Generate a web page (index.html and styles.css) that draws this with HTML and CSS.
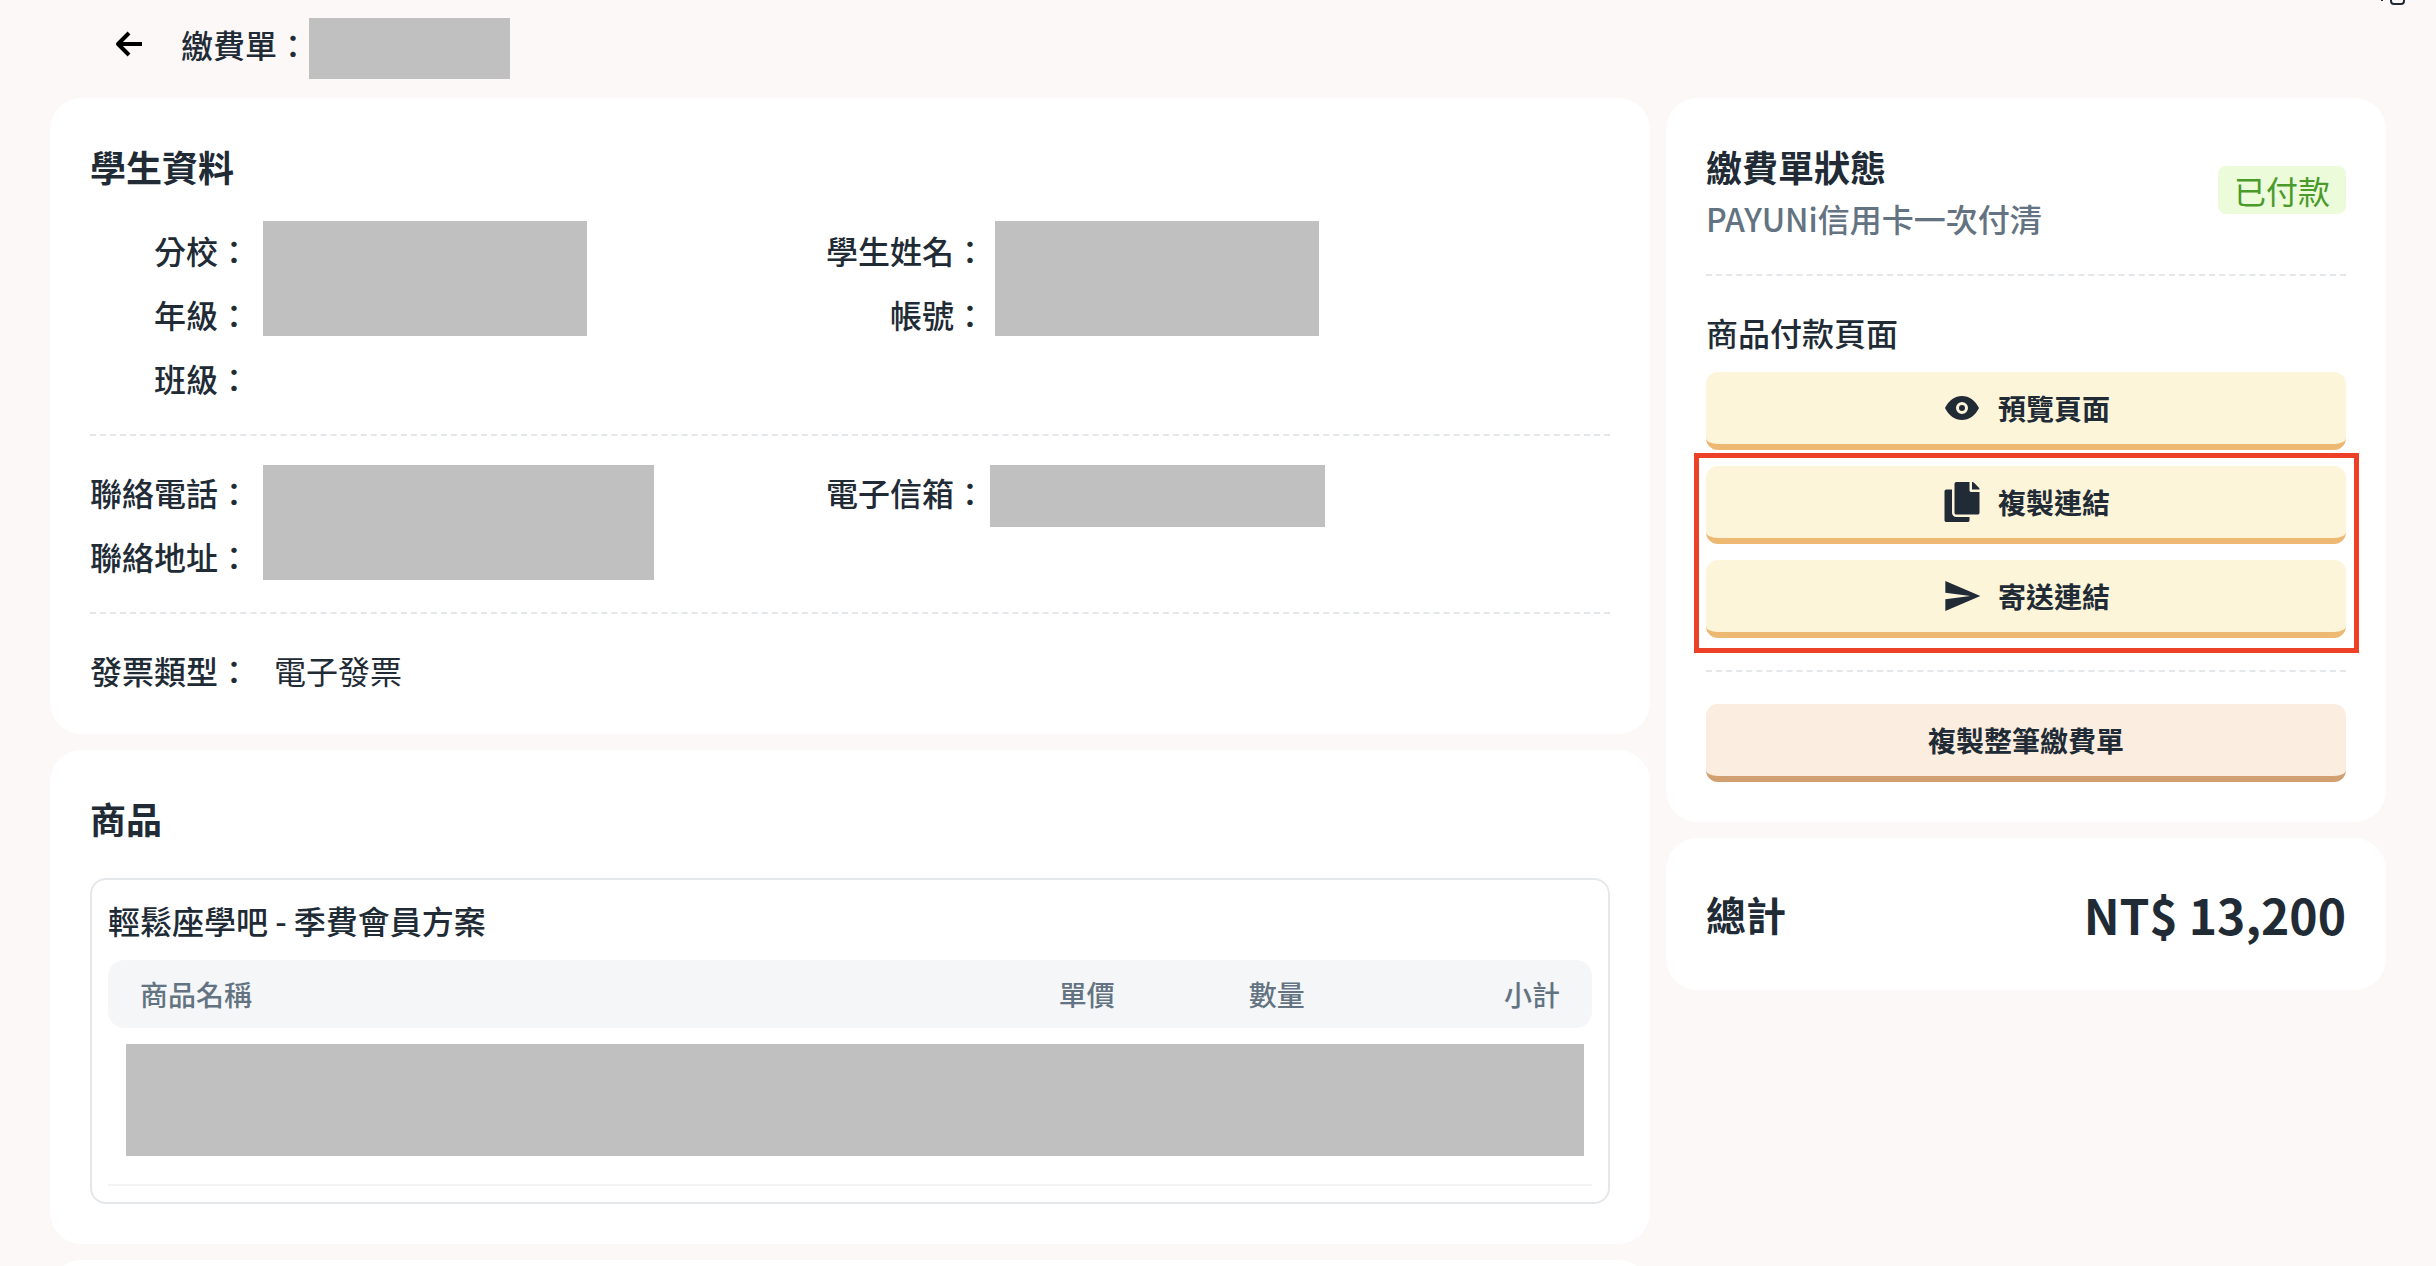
FILE: index.html
```html
<!DOCTYPE html>
<html lang="zh-Hant">
<head>
  <meta charset="UTF-8" />
  <meta name="viewport" content="width=device-width, initial-scale=1.0">
  <title>繳費單</title>
  <link rel="stylesheet" href="styles.css">
</head>
<body>
  <svg class="corner-icon" viewBox="0 0 28 6" aria-hidden="true">
    <path d="M1 0h2v1H1z" fill="#212b36" />
    <path d="M11 -2v3a3 3 0 0 0 3 3h7a3 3 0 0 0 3-3v-3" fill="none" stroke="#212b36" stroke-width="2" />
  </svg>

  <header class="page-header">
    <button class="back-btn" aria-label="返回">
      <svg viewBox="0 0 28 28"><path d="M28 14H3M15 3L4 14l11 11" fill="none" stroke="#000" stroke-width="4" stroke-linejoin="round" /></svg>
    </button>
    <h1>繳費單：</h1>
    <span class="mask mask-id"></span>
  </header>

  <main class="layout">
    <div class="column column-main">
      <section class="card">
        <h2>學生資料</h2>
        <div class="info-grid">
          <div class="info">
            <div class="labels"><span>分校：</span><span>年級：</span><span>班級：</span></div>
            <span class="mask mask-student"></span>
          </div>
          <div class="info info-second">
            <div class="labels"><span>學生姓名：</span><span>帳號：</span></div>
            <span class="mask mask-student"></span>
          </div>
        </div>
        <hr>
        <div class="info-grid">
          <div class="info">
            <div class="labels"><span>聯絡電話：</span><span>聯絡地址：</span></div>
            <span class="mask mask-contact"></span>
          </div>
          <div class="info info-email">
            <div class="labels"><span>電子信箱：</span></div>
            <span class="mask mask-email"></span>
          </div>
        </div>
        <hr>
        <div class="info info-invoice">
          <div class="labels"><span>發票類型：</span></div>
          <span>電子發票</span>
        </div>
      </section>

      <section class="card">
        <h2>商品</h2>
        <div class="product">
          <h3>輕鬆座學吧 - 季費會員方案</h3>
          <table>
            <thead>
              <tr>
                <th class="col-name">商品名稱</th>
                <th class="col-price">單價</th>
                <th class="col-qty">數量</th>
                <th class="col-total">小計</th>
              </tr>
            </thead>
            <tbody>
              <tr>
                <td colspan="4"><div class="mask mask-row"></div></td>
              </tr>
            </tbody>
          </table>
        </div>
      </section>

      <section class="card"></section>
    </div>

    <aside class="column column-side">
      <section class="card">
        <div class="status">
          <div>
            <h2>繳費單狀態</h2>
            <p>PAYUNi信用卡一次付清</p>
          </div>
          <span class="badge">已付款</span>
        </div>
        <hr>
        <h3>商品付款頁面</h3>
        <div class="actions">
          <button class="btn">
            <svg viewBox="0 0 40 40">
              <path fill-rule="evenodd" d="M3 20C7 12 13 8 20 8s13 4 17 12c-4 8-10 12-17 12S7 28 3 20zM20 14a6 6 0 1 0 0 12 6 6 0 0 0 0-12z" />
              <circle cx="20" cy="20" r="3" />
            </svg>
            預覽頁面
          </button>
          <div class="actions highlight">
            <button class="btn">
              <svg viewBox="0 0 512 512"><path transform="translate(32 0)" d="M320 448v40c0 13.255-10.745 24-24 24H24c-13.255 0-24-10.745-24-24V120c0-13.255 10.745-24 24-24h72v296c0 30.879 25.121 56 56 56h168zm0-344V0H152c-13.255 0-24 10.745-24 24v368c0 13.255 10.745 24 24 24h272c13.255 0 24-10.745 24-24V128H344c-13.200 0-24-10.800-24-24zm120.971-31.029L375.029 7.029A24 24 0 0 0 358.059 0H352v96h96v-6.059a24 24 0 0 0-7.029-16.970z" /></svg>
              複製連結
            </button>
            <button class="btn">
              <svg viewBox="0 0 24 24"><path d="M2.010 21L23 12 2.010 3 2 10l15 2-15 2z" /></svg>
              寄送連結
            </button>
          </div>
        </div>
        <hr>
        <button class="btn btn-copy">複製整筆繳費單</button>
      </section>

      <section class="card total">
        <span class="total-label">總計</span>
        <span class="total-value">NT$ 13,200</span>
      </section>
    </aside>
  </main>
</body>
</html>
```
FILE: styles.css
```css
:root {
  --bg: #fcf8f7;
  --text: #212b36;
  --muted: #637381;
  --line: #e5e8eb;
  --mask: #c0c0c0;
}

* {
  box-sizing: border-box;
}

html {
  scrollbar-width: none;
}

body {
  margin: 0;
  background: var(--bg);
  color: var(--text);
  font-family: "Noto Sans CJK TC", sans-serif;
  font-size: 32px;
  line-height: 48px;
}

h1, h2, h3, p {
  margin: 0;
}

h1, h3 {
  font-size: 32px;
  font-weight: 500;
}

h2 {
  font-size: 36px;
  line-height: 56px;
  font-weight: 700;
}

hr {
  margin: 32px 0;
  border: 0;
  border-top: 2px dashed var(--line);
}

.corner-icon {
  position: absolute;
  top: 0;
  right: 28px;
  width: 28px;
  height: 6px;
}

.page-header {
  display: flex;
  align-items: center;
  padding: 18px 50px 19px 108px;
}

.back-btn {
  display: flex;
  width: 40px;
  padding: 6px;
  margin: 0 33px 10px 0;
  border: 0;
  background: none;
  cursor: pointer;
}

.back-btn svg {
  width: 28px;
  height: 28px;
}

.page-header h1 {
  margin-bottom: 10px;
}

.mask {
  display: block;
  flex: none;
  background: var(--mask);
}

.mask-id {
  width: 201px;
  height: 61px;
}

.mask-student {
  width: 324px;
  height: 115px;
}

.mask-contact {
  width: 391px;
  height: 115px;
}

.mask-email {
  width: 335px;
  height: 62px;
}

.mask-row {
  height: 112px;
}

.layout {
  display: flex;
  align-items: flex-start;
  gap: 16px;
  padding: 0 50px;
}

.column {
  display: flex;
  flex-direction: column;
  gap: 16px;
  min-width: 0;
}

.column-main {
  flex: 20 1 0;
}

.column-side {
  flex: 9 1 0;
}

.card {
  padding: 40px;
  border-radius: 32px;
  background: #fff;
}

.info-grid {
  display: grid;
  grid-template-columns: 46fr 49fr;
}

.card h2 + .info-grid {
  margin-top: 32px;
}

.info {
  display: flex;
  align-items: flex-start;
  gap: 13px;
}

.info-second {
  gap: 9px;
}

.info-email {
  gap: 4px;
}

.info-invoice {
  gap: 24px;
}

.mask-student {
  margin-top: -5px;
}

.mask-contact,
.mask-email {
  margin-top: -3px;
}

.labels {
  display: flex;
  flex-direction: column;
  gap: 16px;
  width: 160px;
  text-align: right;
  font-weight: 500;
}

.product {
  margin-top: 32px;
  padding: 16px;
  border: 2px solid var(--line);
  border-radius: 16px;
}

table {
  width: 100%;
  margin-top: 16px;
  border-spacing: 0;
  table-layout: fixed;
}

th {
  height: 68px;
  padding: 0 32px;
  background: #f4f6f8;
  color: var(--muted);
  font-size: 28px;
  line-height: 40px;
  font-weight: 500;
  text-align: right;
}

th:first-child {
  border-radius: 16px 0 0 16px;
  text-align: left;
}

th:last-child {
  border-radius: 0 16px 16px 0;
}

.col-price {
  width: 15%;
}

.col-qty {
  width: 12.8%;
}

.col-total {
  width: 17.2%;
}

td {
  padding: 16px 8px 28px 18px;
  border-bottom: 2px solid #f1f3f4;
}

.status {
  display: flex;
  align-items: center;
  justify-content: space-between;
}

.status p {
  color: var(--muted);
  font-weight: 500;
}

.badge {
  padding: 0 16px;
  border-radius: 8px;
  background: #ecfbd9;
  color: #4b9a2c;
}

.actions {
  display: flex;
  flex-direction: column;
  gap: 16px;
}

h3 + .actions {
  margin-top: 16px;
}

.btn {
  display: flex;
  align-items: center;
  justify-content: center;
  gap: 16px;
  width: 100%;
  height: 78px;
  padding: 0;
  border: 0;
  border-bottom: 6px solid #edb872;
  border-radius: 12px;
  background: #fdf5da;
  color: var(--text);
  font-family: inherit;
  font-size: 28px;
  line-height: 40px;
  font-weight: 700;
  cursor: pointer;
}

.btn svg {
  width: 40px;
  height: 40px;
  fill: currentColor;
}

.btn-copy {
  border-bottom-color: #d2a070;
  background: #fbeddf;
}

/* red frame around the link buttons */
.highlight {
  position: relative;
}

.highlight::after {
  content: "";
  position: absolute;
  inset: -13px -13px -15px -12px;
  border: 5px solid #ec4126;
  pointer-events: none;
}

.total {
  display: flex;
  align-items: center;
  justify-content: space-between;
  line-height: 72px;
  font-weight: 700;
}

.total-label {
  font-size: 40px;
}

.total-value {
  font-size: 48px;
}
```
